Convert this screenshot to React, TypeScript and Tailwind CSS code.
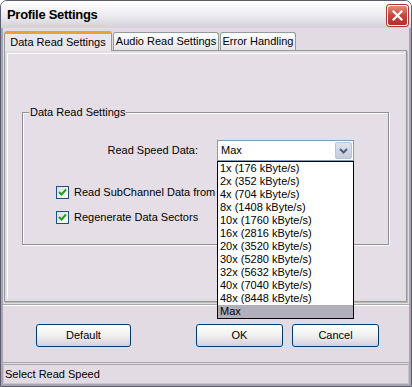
import React from "react";

const items = [
  "1x (176 kByte/s)",
  "2x (352 kByte/s)",
  "4x (704 kByte/s)",
  "8x (1408 kByte/s)",
  "10x (1760 kByte/s)",
  "16x (2816 kByte/s)",
  "20x (3520 kByte/s)",
  "30x (5280 kByte/s)",
  "32x (5632 kByte/s)",
  "40x (7040 kByte/s)",
  "48x (8448 kByte/s)",
  "Max",
];

function Check() {
  return (
    <div className="w-[13px] h-[13px] border border-[#1c5180] bg-gradient-to-br from-[#dcdcd7] to-white flex items-center justify-center shrink-0">
      <svg width="9" height="9" viewBox="0 0 9 9">
        <path d="M1 4 L3.5 6.5 L8 1.5" stroke="#21a121" strokeWidth="2" fill="none" />
      </svg>
    </div>
  );
}

function Btn({ label, w }: { label: string; w: string }) {
  return (
    <div
      className={`${w} h-[23px] rounded-[3px] border border-[#003c74] bg-gradient-to-b from-white via-[#f0f0ee] to-[#d6d0e0] flex items-center justify-center`}
    >
      {label}
    </div>
  );
}

export default function App() {
  return (
    <div className="w-[412px] h-[387px] overflow-hidden font-['Liberation_Sans',Arial,sans-serif] text-[11px] text-black">
      <div className="w-full h-full flex flex-col bg-[#e3dbe3] rounded-t-[7px] border border-[#5c5c6e]">
        {/* Title bar */}
        <div className="h-[27px] shrink-0 rounded-t-[6px] bg-gradient-to-b from-white via-[#eeeef2] to-[#d2d0d8] flex items-start pl-[6px] pr-[3px]">
          <div className="mt-[6px] text-[13px] font-bold tracking-[-0.3px] leading-[16px] flex-1">
            Profile Settings
          </div>
          <div className="mt-[4px] w-[21px] h-[21px] rounded-[3px] border border-white bg-gradient-to-b from-[#e48a7e] via-[#c8453a] to-[#b0302a] flex items-center justify-center shadow-[0_0_0_1px_#a33]">
            <svg width="11" height="11" viewBox="0 0 11 11">
              <path d="M1.5 1.5 L9.5 9.5 M9.5 1.5 L1.5 9.5" stroke="white" strokeWidth="2.2" strokeLinecap="square" />
            </svg>
          </div>
        </div>

        {/* Body */}
        <div className="flex-1 flex flex-col border-x-[2px] border-b-[2px] border-[#a8a4b0] pt-[2px]">
          {/* Tabs */}
          <div className="flex items-end h-[20px] pl-[1px]">
            <div className="w-[108px] h-[20px] relative z-10 bg-[#ebe5ec] border-x border-[#919b9c] border-t-[3px] border-t-[#f0a030] rounded-t-[3px] flex items-center justify-center -mb-[1px] pb-[1px]">
              Data Read Settings
            </div>
            <div className="w-[106px] h-[18px] ml-[1px] bg-gradient-to-b from-white to-[#e6e4ea] border border-b-0 border-[#919b9c] rounded-t-[3px] flex items-center justify-center">
              Audio Read Settings
            </div>
            <div className="w-[76px] h-[18px] ml-[1px] bg-gradient-to-b from-white to-[#e6e4ea] border border-b-0 border-[#919b9c] rounded-t-[3px] flex items-center justify-center">
              Error Handling
            </div>
          </div>
          {/* Panel */}
          <div className="h-[252px] ml-[1px] mr-[2px] border border-[#919b9c] shadow-[1px_1px_0_#b8bca8] bg-[#e3dbe3] p-[2px]">
            <div className="h-full bg-[#e6dee6] border-t border-l border-white">
              <div className="relative ml-[14px] mt-[58px] w-[367px] h-[133px] border border-[#8e8e98] shadow-[1px_1px_0_#fff,inset_1px_1px_0_#fff]">
                <span className="absolute left-[6px] -top-[8px] px-[1px] bg-[#e6dee6] leading-[14px]">
                  Data Read Settings
                </span>
                <div className="flex items-center pt-[27px]">
                  <div className="w-[175px] text-right">Read Speed Data:</div>
                  <div className="relative ml-[19px] w-[137px] h-[21px] border border-[#7f9db9] bg-white flex items-center">
                    <span className="pl-[3px] flex-1">Max</span>
                    <div className="w-[17px] h-[17px] mr-[1px] rounded-[2px] border border-[#b8c4d8] bg-gradient-to-b from-[#e0e4ee] to-[#c4cbdc] flex items-center justify-center">
                      <svg width="9" height="6" viewBox="0 0 9 6">
                        <path d="M1 1 L4.5 4.5 L8 1" stroke="#4d6185" strokeWidth="2" fill="none" />
                      </svg>
                    </div>
                    <div className="absolute z-20 left-[-1px] top-[20px] w-[137px] border border-black bg-white">
                      {items.map((t) => (
                        <div
                          key={t}
                          className={`h-[13px] leading-[13px] pl-[2px] ${t === "Max" ? "bg-[#b0afbb]" : ""}`}
                        >
                          {t}
                        </div>
                      ))}
                    </div>
                  </div>
                </div>
                <div className="pl-[33px] mt-[25px] flex flex-col gap-[12px]">
                  <div className="flex items-center gap-[5px] h-[13px] whitespace-nowrap">
                    <Check />
                    <span className="w-[142px] overflow-hidden">Read SubChannel Data from Disc</span>
                  </div>
                  <div className="flex items-center gap-[5px] h-[13px] whitespace-nowrap">
                    <Check />
                    <span>Regenerate Data Sectors</span>
                  </div>
                </div>
              </div>
            </div>
          </div>
          {/* separator */}
          <div className="mt-[2px] h-[2px] border-t border-[#a9a6ae] border-b border-b-white" />
          {/* Buttons */}
          <div className="flex items-start pt-[18px] h-[56px]">
            <div className="ml-[33px]">
              <Btn label="Default" w="w-[95px]" />
            </div>
            <div className="ml-[65px]">
              <Btn label="OK" w="w-[87px]" />
            </div>
            <div className="ml-[9px]">
              <Btn label="Cancel" w="w-[87px]" />
            </div>
          </div>
          {/* Status bar */}
          <div className="h-[22px] border-t border-[#a9a6ae] pt-[1px]">
            <div className="h-[20px] mx-[0px] border border-[#c8c4cc] border-t-[#a9a6ae] flex items-center pl-[1px]">
              Select Read Speed
            </div>
          </div>
        </div>
      </div>
    </div>
  );
}
